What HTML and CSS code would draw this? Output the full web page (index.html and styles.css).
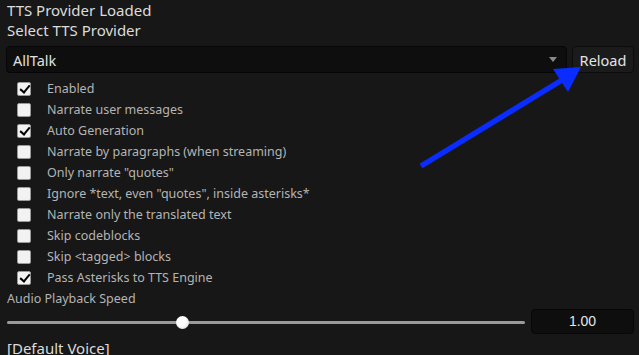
FILE: index.html
```html
<!DOCTYPE html>
<html lang="en">
<head>
    <meta charset="UTF-8">
    <meta name="viewport" content="width=device-width, initial-scale=1.0">
    <title>TTS</title>
    <link rel="stylesheet" href="styles.css">
</head>
<body>
    <div class="panel">
        <div class="status">TTS Provider Loaded</div>
        <div class="title">Select TTS Provider</div>
        <div class="provider-row">
            <div class="select">
                <span>AllTalk</span>
                <span class="caret"></span>
            </div>
            <button class="reload">Reload</button>
        </div>
        <div class="options">
            <label class="opt"><input type="checkbox" checked><span>Enabled</span></label>
            <label class="opt"><input type="checkbox"><span>Narrate user messages</span></label>
            <label class="opt"><input type="checkbox" checked><span>Auto Generation</span></label>
            <label class="opt"><input type="checkbox"><span>Narrate by paragraphs (when streaming)</span></label>
            <label class="opt"><input type="checkbox"><span>Only narrate "quotes"</span></label>
            <label class="opt"><input type="checkbox"><span>Ignore *text, even "quotes", inside asterisks*</span></label>
            <label class="opt"><input type="checkbox"><span>Narrate only the translated text</span></label>
            <label class="opt"><input type="checkbox"><span>Skip codeblocks</span></label>
            <label class="opt"><input type="checkbox"><span>Skip &lt;tagged&gt; blocks</span></label>
            <label class="opt"><input type="checkbox" checked><span>Pass Asterisks to TTS Engine</span></label>
        </div>
        <div class="small-label">Audio Playback Speed</div>
        <div class="speed-row">
            <div class="slider">
                <div class="track"></div>
                <div class="thumb"></div>
            </div>
            <div class="speed-value">1.00</div>
        </div>
        <div class="title">[Default Voice]</div>
    </div>

    <svg class="arrow" width="639" height="355" viewBox="0 0 639 355">
        <line x1="421" y1="166" x2="562" y2="80" stroke="#0a2cff" stroke-width="5.5" stroke-linecap="butt"/>
        <polygon points="581,67 553,69 568,92" fill="#0a2cff"/>
    </svg>
</body>
</html>
```

FILE: styles.css
```css
body {
    margin: 0;
    background-color: #171717;
    color: #d6d6d6;
    font-family: "Noto Sans", "Open Sans", sans-serif;
    position: relative;
    overflow: hidden;
}
.panel {
    padding: 0 5px 0 7px;
}
.status, .title {
    font-size: 15px;
    line-height: 20px;
    color: #dcdcdc;
}
.provider-row {
    display: flex;
    gap: 5px;
    margin-top: 6px;
    margin-left: -1px;
}
.select {
    flex: 1;
    height: 27px;
    box-sizing: border-box;
    background-color: #0e0e0e;
    border: 1px solid #060606;
    border-radius: 4px;
    display: flex;
    align-items: center;
    justify-content: space-between;
    padding: 0 9px 0 6px;
    font-size: 14.5px;
    color: #e0e0e0;
}
.caret {
    width: 0;
    height: 0;
    border-left: 4px solid transparent;
    border-right: 4px solid transparent;
    border-top: 5px solid #8a8a8a;
}
.reload {
    width: 62px;
    height: 27px;
    background-color: #1b1b1b;
    border: 1px solid #0c0c0c;
    border-radius: 4px;
    color: #e4e4e4;
    font-family: inherit;
    font-size: 14.5px;
    padding: 0;
}
.options {
    margin-top: 5px;
    display: flex;
    flex-direction: column;
}
.opt {
    display: flex;
    align-items: center;
    height: 21px;
    font-size: 12.5px;
    color: #b4b4b4;
}
.opt input {
    appearance: none;
    margin: 0 16px 0 10px;
    width: 14px;
    height: 14px;
    background-color: #f2f2f2;
    border: 1px solid #9a9a9a;
    border-radius: 2px;
    box-sizing: border-box;
    position: relative;
}
.opt input:checked::after {
    content: "";
    position: absolute;
    left: 3.5px;
    top: 0.5px;
    width: 4px;
    height: 8px;
    border: solid #000;
    border-width: 0 2.5px 2.5px 0;
    transform: rotate(40deg);
}
.small-label {
    margin-top: 2px;
    font-size: 12.5px;
    line-height: 18px;
    color: #b4b4b4;
}
.speed-row {
    display: flex;
    align-items: center;
    gap: 6px;
    margin: 1px 0 4px;
}
.slider {
    flex: 1;
    height: 24px;
    position: relative;
}
.track {
    position: absolute;
    left: 0;
    right: 0;
    top: 11px;
    height: 3px;
    background-color: #9a9a9a;
    border-radius: 2px;
}
.thumb {
    position: absolute;
    left: 169px;
    top: 6px;
    width: 13px;
    height: 13px;
    border-radius: 50%;
    background: radial-gradient(circle at 40% 40%, #ffffff 40%, #d0d0d0 100%);
}
.speed-value {
    width: 103px;
    height: 25px;
    box-sizing: border-box;
    background-color: #0e0e0e;
    border: 1px solid #070707;
    border-radius: 4px;
    text-align: center;
    font-family: "Liberation Sans", Arial, sans-serif;
    font-size: 14px;
    line-height: 23px;
    color: #e6e6e6;
}
.arrow {
    position: absolute;
    left: 0;
    top: 0;
    pointer-events: none;
}
```
